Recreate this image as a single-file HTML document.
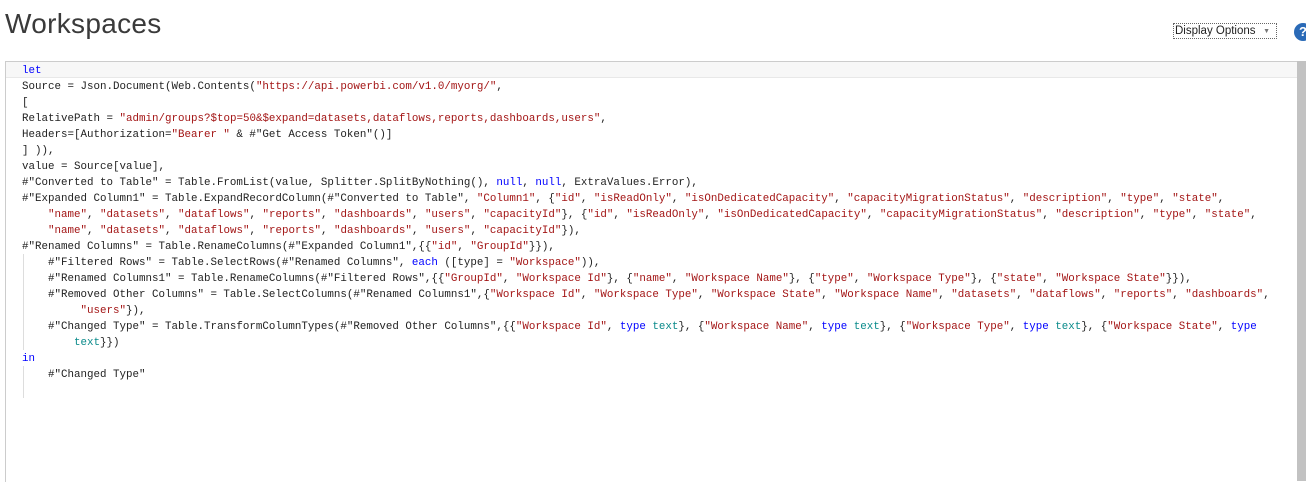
<!DOCTYPE html>
<html><head><meta charset="utf-8"><style>
body{margin:0;width:1306px;height:476px;background:#fff;overflow:hidden;position:relative;font-family:"Liberation Sans",sans-serif}
h1{position:absolute;left:5px;top:8px;margin:0;font-weight:normal;font-size:28px;color:#3a3a3a;letter-spacing:0.3px}
.dop{position:absolute;left:1173px;top:23px;width:101px;height:14px;border:1px dotted #666;font-size:11.5px;color:#222;line-height:15px;padding-left:1px;box-sizing:content-box}
.dop span{position:absolute;right:6px;top:0;font-size:7px;color:#777}
.help{position:absolute;left:1294px;top:23px;width:18px;height:18px;border-radius:50%;background:#2a6ab7;color:#fff;font-weight:bold;font-size:13px;text-align:center;line-height:18px}
.ed{position:absolute;left:5px;top:61px;width:1292px;height:420px;border-top:1px solid #ccc;border-left:1px solid #ccc;background:#fff}
.sb{position:absolute;left:1297px;top:61px;width:9px;height:420px;background:#c2c2c2}
.cur{position:absolute;left:6px;top:62px;width:1291px;height:15px;background:#f7f7f7;border-bottom:1px solid #e8e8e8}
.guide{position:absolute;left:23px;width:0;border-left:1px solid #ddd}
pre{position:absolute;left:22px;top:63px;margin:0;font-family:"Liberation Mono",monospace;font-size:10.83px;line-height:16px;color:#222}
.k{color:#0000ff}.s{color:#a31515}.t{color:#098a8a}
</style></head><body>
<h1>Workspaces</h1>
<div class="dop">Display Options<span>▼</span></div>
<div class="help">?</div>
<div class="ed"></div>
<div class="cur"></div>
<div class="sb"></div>
<div class="guide" style="top:254px;height:96px"></div>
<div class="guide" style="top:366px;height:32px"></div>
<pre><span class="k">let</span>
Source = Json.Document(Web.Contents(<span class="s">"https://api.powerbi.com/v1.0/myorg/"</span>,
[
RelativePath = <span class="s">"admin/groups?$top=50&amp;$expand=datasets,dataflows,reports,dashboards,users"</span>,
Headers=[Authorization=<span class="s">"Bearer "</span> &amp; #"Get Access Token"()]
] )),
value = Source[value],
#"Converted to Table" = Table.FromList(value, Splitter.SplitByNothing(), <span class="k">null</span>, <span class="k">null</span>, ExtraValues.Error),
#"Expanded Column1" = Table.ExpandRecordColumn(#"Converted to Table", <span class="s">"Column1"</span>, {<span class="s">"id"</span>, <span class="s">"isReadOnly"</span>, <span class="s">"isOnDedicatedCapacity"</span>, <span class="s">"capacityMigrationStatus"</span>, <span class="s">"description"</span>, <span class="s">"type"</span>, <span class="s">"state"</span>,
    <span class="s">"name"</span>, <span class="s">"datasets"</span>, <span class="s">"dataflows"</span>, <span class="s">"reports"</span>, <span class="s">"dashboards"</span>, <span class="s">"users"</span>, <span class="s">"capacityId"</span>}, {<span class="s">"id"</span>, <span class="s">"isReadOnly"</span>, <span class="s">"isOnDedicatedCapacity"</span>, <span class="s">"capacityMigrationStatus"</span>, <span class="s">"description"</span>, <span class="s">"type"</span>, <span class="s">"state"</span>,
    <span class="s">"name"</span>, <span class="s">"datasets"</span>, <span class="s">"dataflows"</span>, <span class="s">"reports"</span>, <span class="s">"dashboards"</span>, <span class="s">"users"</span>, <span class="s">"capacityId"</span>}),
#"Renamed Columns" = Table.RenameColumns(#"Expanded Column1",{{<span class="s">"id"</span>, <span class="s">"GroupId"</span>}}),
    #"Filtered Rows" = Table.SelectRows(#"Renamed Columns", <span class="k">each</span> ([type] = <span class="s">"Workspace"</span>)),
    #"Renamed Columns1" = Table.RenameColumns(#"Filtered Rows",{{<span class="s">"GroupId"</span>, <span class="s">"Workspace Id"</span>}, {<span class="s">"name"</span>, <span class="s">"Workspace Name"</span>}, {<span class="s">"type"</span>, <span class="s">"Workspace Type"</span>}, {<span class="s">"state"</span>, <span class="s">"Workspace State"</span>}}),
    #"Removed Other Columns" = Table.SelectColumns(#"Renamed Columns1",{<span class="s">"Workspace Id"</span>, <span class="s">"Workspace Type"</span>, <span class="s">"Workspace State"</span>, <span class="s">"Workspace Name"</span>, <span class="s">"datasets"</span>, <span class="s">"dataflows"</span>, <span class="s">"reports"</span>, <span class="s">"dashboards"</span>,
         <span class="s">"users"</span>}),
    #"Changed Type" = Table.TransformColumnTypes(#"Removed Other Columns",{{<span class="s">"Workspace Id"</span>, <span class="k">type</span> <span class="t">text</span>}, {<span class="s">"Workspace Name"</span>, <span class="k">type</span> <span class="t">text</span>}, {<span class="s">"Workspace Type"</span>, <span class="k">type</span> <span class="t">text</span>}, {<span class="s">"Workspace State"</span>, <span class="k">type</span>
        <span class="t">text</span>}})
<span class="k">in</span>
    #"Changed Type"</pre>
</body></html>
